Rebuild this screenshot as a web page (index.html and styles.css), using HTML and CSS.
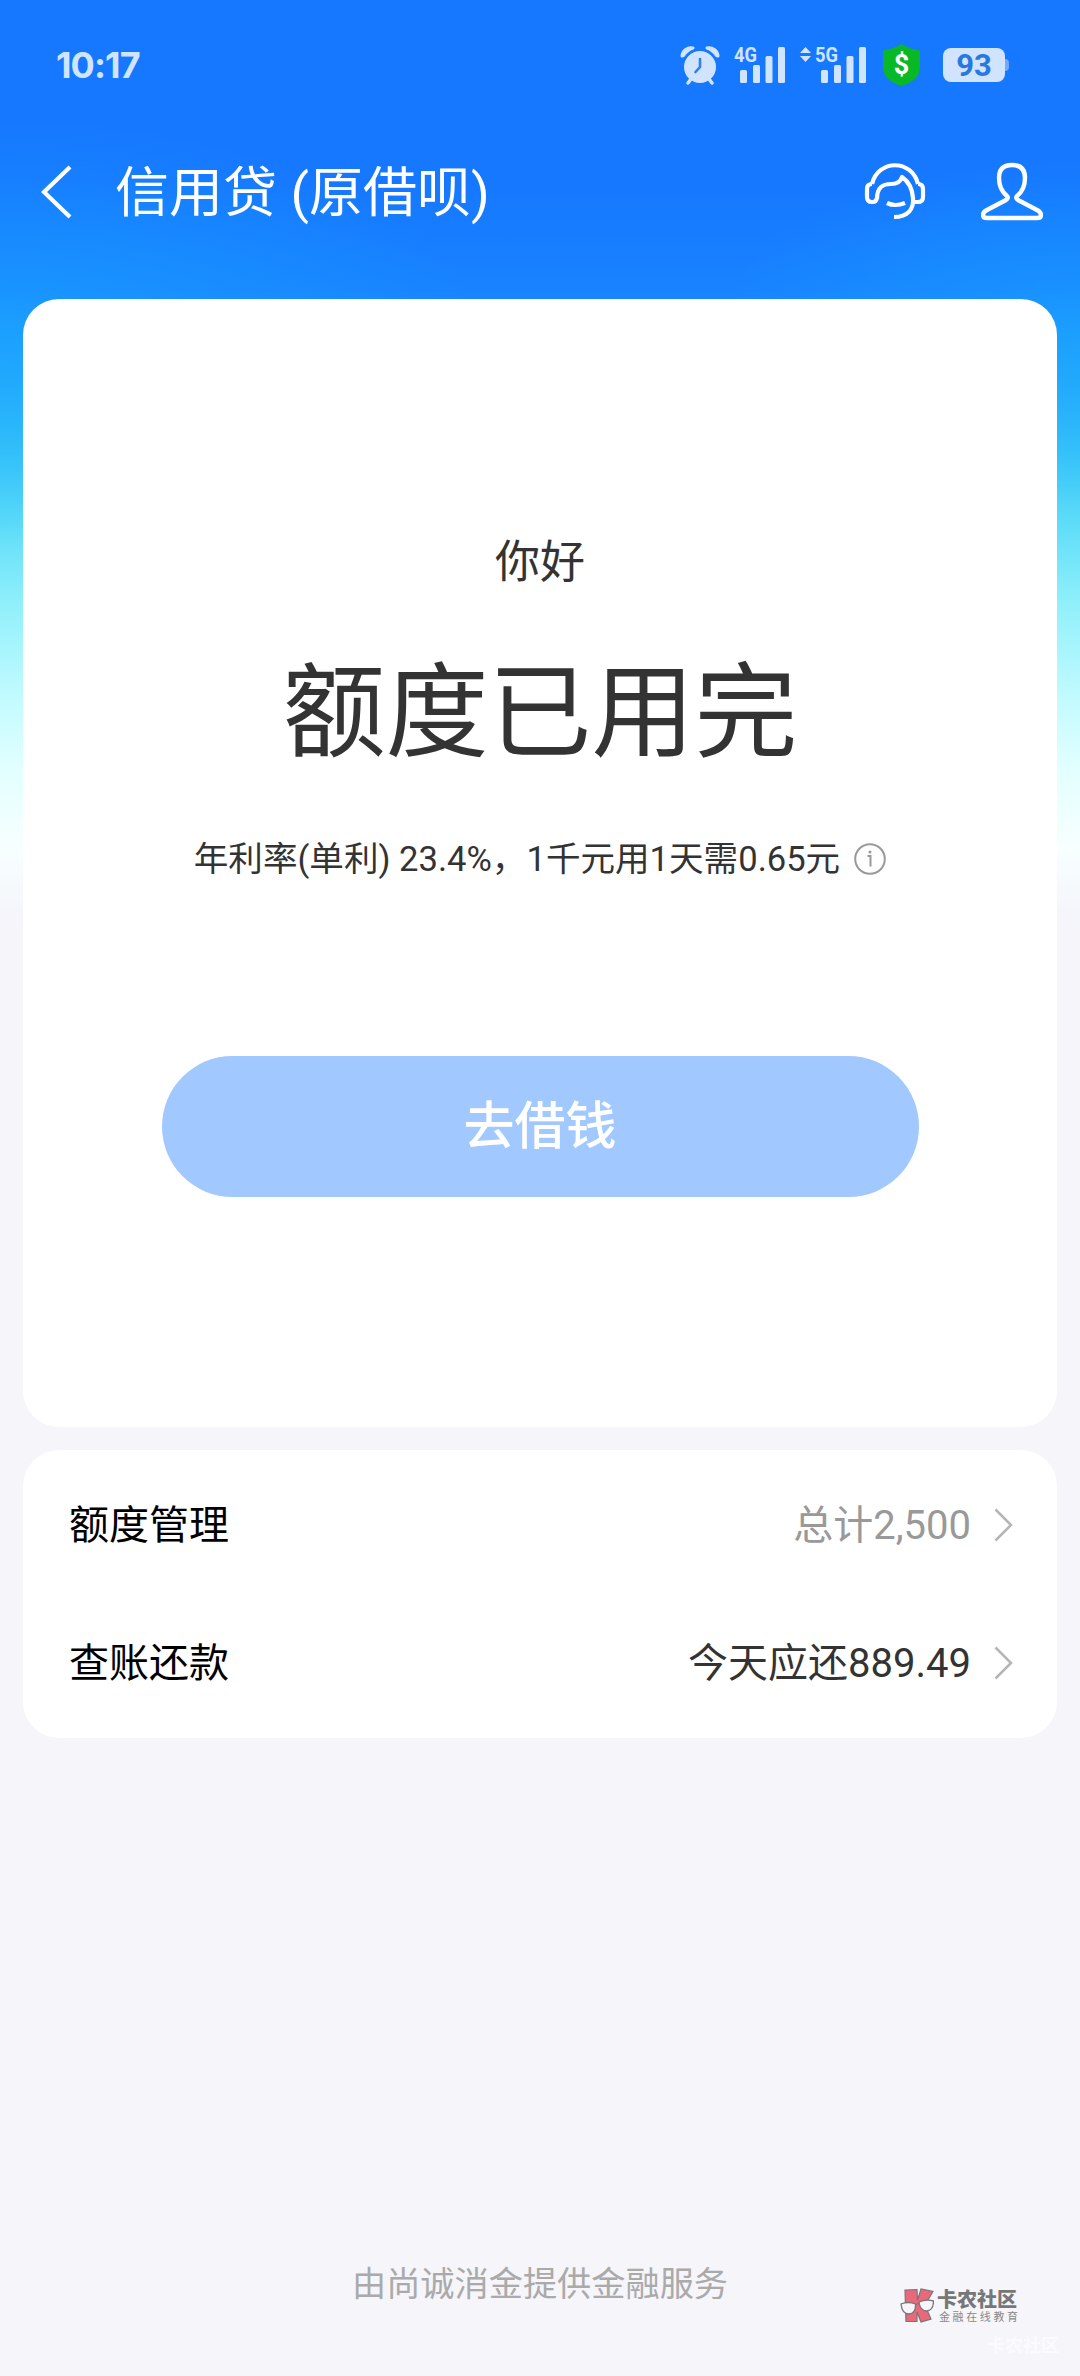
FILE: index.html
```html
<!DOCTYPE html>
<html lang="zh-CN">
<head>
<meta charset="utf-8">
<title>信用贷</title>
<link rel="stylesheet" href="styles.css">
</head>
<body>
<div class="page">
  <div class="status">
    <span class="time">10:17</span>
    <div class="status-icons">
      <svg class="alarm" width="38" height="40" viewBox="0 0 38 40"><g fill="#d0e4ff"><circle cx="19" cy="22" r="16"/><path d="M1 11A9 9 0 0 1 12 3Q6 5 2.500 10.500ZM37 11A9 9 0 0 0 26 3Q32 5 35.500 10.500Z" stroke="#d0e4ff" stroke-width="3" stroke-linejoin="round"/><path d="M10 34l-3 4M28 34l3 4" stroke="#d0e4ff" stroke-width="3.500" stroke-linecap="round"/></g><path d="M19 14v8l-4.500 5" fill="none" stroke="#2f80e8" stroke-width="2.600" stroke-linecap="round"/></svg>
      <svg class="signal" width="52" height="40" viewBox="0 0 52 40" fill="#d0e4ff"><text class="net" x="0" y="17" textLength="23" lengthAdjust="spacingAndGlyphs">4G</text><rect x="6" y="25" width="7" height="13" rx="1.500"/><rect x="19" y="20" width="7" height="18" rx="1.500"/><rect x="31.500" y="11" width="7" height="27" rx="1.500"/><rect x="44" y="2" width="7" height="36" rx="1.500"/></svg>
      <svg class="signal-data" width="67" height="40" viewBox="0 0 67 40" fill="#d0e4ff"><path d="M0 8l5.500-6L11 8zM0 11h11l-5.500 6z"/><text class="net" x="15" y="17" textLength="23" lengthAdjust="spacingAndGlyphs">5G</text><rect x="21" y="25" width="7" height="13" rx="1.500"/><rect x="34" y="20" width="7" height="18" rx="1.500"/><rect x="46.500" y="11" width="7" height="27" rx="1.500"/><rect x="59" y="2" width="7" height="36" rx="1.500"/></svg>
      <svg class="shield" width="39" height="44" viewBox="0 0 39 44"><path d="M19.500 1Q27 6 37 7Q38 7 38 9V24Q38 37 19.500 43Q1 37 1 24V9Q1 7 2 7Q12 6 19.500 1Z" fill="#09b826"/><text class="dollar" x="19.500" y="31" text-anchor="middle">$</text></svg>
      <div class="battery"><span>93</span></div>
    </div>
  </div>

  <div class="navbar">
    <svg class="back" width="34" height="56" viewBox="0 0 34 56"><path d="M32 3L6 28L32 53" fill="none" stroke="#fff" stroke-width="4.200"/></svg>
    <h1 class="title">信用贷 (原借呗)</h1>
    <svg class="service" width="62" height="60" viewBox="0 0 62 60" fill="none" stroke="#fff" stroke-width="4.200" stroke-linejoin="round"><path d="M8 22C14 -3 48 -3 54 22"/><path d="M8 22Q3 22 3 27V35Q3 40 8 40H9Q12 40 13 36M54 22Q59 22 59 27V35Q59 40 54 40H49"/><path d="M13 37C13 25 19 22 27 22Q36 22 38 15Q48 22 49 36C50 47 44 55 30 55"/><path d="M23 41q8 4 18 0"/></svg>
    <svg class="profile" width="62" height="60" viewBox="0 0 62 60" fill="none" stroke="#fff" stroke-width="4.400" stroke-linejoin="round"><path d="M31 3C22 3 18 8 18 16C18 24 21 30 26 34Q28 36 25 38L6 48Q2 50 2 53Q2 56 6 56H56Q60 56 60 53Q60 50 56 48L37 38Q34 36 36 34C41 30 44 24 44 16C44 8 40 3 31 3Z"/></svg>
  </div>

  <main class="content">
    <section class="card quota">
      <p class="greeting">你好</p>
      <h2 class="headline">额度已用完</h2>
      <div class="rate"><span>年利率(单利) 23.4%，1千元用1天需0.65元</span>
        <svg width="32" height="32" viewBox="0 0 32 32" fill="none" stroke="#999" stroke-width="2"><circle cx="16" cy="16" r="14.800"/><path d="M13.500 13h3v10.500"/><circle cx="16" cy="9" r="1.500" fill="#999" stroke="none"/></svg>
      </div>
      <button class="borrow">去借钱</button>
    </section>
    <section class="card list">
      <div class="row"><span class="label">额度管理</span><span class="value muted">总计2,500</span><svg width="20" height="34" viewBox="0 0 20 34"><path d="M2.500 1.500L18 17L2.500 32.500" fill="none" stroke="#b5b5b5" stroke-width="2.500"/></svg></div>
      <div class="row"><span class="label">查账还款</span><span class="value">今天应还889.49</span><svg width="20" height="34" viewBox="0 0 20 34"><path d="M2.500 1.500L18 17L2.500 32.500" fill="none" stroke="#b5b5b5" stroke-width="2.500"/></svg></div>
    </section>
  </main>

  <footer class="footer">由尚诚消金提供金融服务</footer>
  <div class="watermark">
    <svg width="34" height="36" viewBox="0 0 34 36"><path d="M5 2L17 1.500L17.500 12L21 1L33 3.500L25 17L31 31L21 34L17 24V33.500H6Z" fill="#e9697a" stroke="#777" stroke-width="1.200"/><path d="M1 16Q8 13 15.500 16Q16 25 9 26Q2 26 1 16ZM19 14Q26 11 33.500 13Q33.500 22 27 23Q20 23 19 14Z" fill="#f5f5fa" stroke="#777" stroke-width="1.300"/><path d="M15.500 17q2-2 4-1" stroke="#777" fill="none"/></svg>
    <div class="brand"><b>卡农社区</b><small>金融在线教育</small></div>
  </div>
  <span class="ghost">卡农社区</span>
</div>
</body>
</html>
```
FILE: styles.css
```css
* { box-sizing: border-box; margin: 0; padding: 0; }
body { font-family: Roboto, "Noto Sans CJK SC", sans-serif; color: #333; background: #f5f5fa; }
.page {
  position: relative;
  display: flex;
  flex-direction: column;
  height: 2376px;
  overflow: hidden;
  background:
    radial-gradient(ellipse 480px 220px at 0 330px, rgba(26, 172, 255, .5), rgba(26, 172, 255, 0)),
    radial-gradient(ellipse 360px 180px at 1080px 330px, rgba(26, 172, 255, .45), rgba(26, 172, 255, 0)),
    linear-gradient(#1677ff 0, #1677ff 180px, #1883ff 290px, #24a8fc 380px, #38c4f8 450px, #5cdcf8 520px, #8eeffb 600px, #c3fbff 700px, #e3ffff 770px, #f8ffff 850px, #f5f6fb 910px, #f5f5fa 1000px);
}
.status { display: flex; justify-content: space-between; align-items: center; height: 130px; padding: 0 71px 0 56px; }
.time { font: 700 36px/40px Inter, sans-serif; letter-spacing: -.9px; color: #d0e4ff; }
.status-icons { display: flex; align-items: center; }
.status-icons svg { overflow: visible; }
.alarm { margin-right: 15px; }
.signal { margin-right: 14px; }
.signal-data { margin-right: 15px; }
.shield { margin-right: 22px; }
.net { font: 700 21px Roboto, sans-serif; }
.dollar { font: 700 27px Roboto, sans-serif; fill: #fff; }
.battery {
  position: relative;
  width: 62px;
  height: 34px;
  margin-right: 4px;
  border-radius: 8px;
  background: #d0e4ff;
  color: #2878df;
  font: 700 31px/36px Roboto, sans-serif;
  text-align: center;
}
.battery::after { content: ""; position: absolute; right: -4px; top: 11px; width: 4px; height: 12px; border-radius: 0 4px 4px 0; background: #6fabff; }
.navbar { display: flex; align-items: center; height: 124px; padding: 0 37px 0 38px; }
.back { margin-right: 43px; }
.title { flex: 1; padding-top: 3px; font-size: 54px; line-height: 70px; font-weight: 400; color: #fff; white-space: pre; }
.service { margin-right: 55px; }
.content { display: flex; flex-direction: column; gap: 23px; padding: 45px 23px 0; }
.card { border-radius: 36px; background: #fff; }
.quota { display: flex; flex-direction: column; align-items: center; height: 1128px; padding-top: 231px; }
.greeting { font-size: 45px; line-height: 66px; }
.headline { margin-top: 43px; font-size: 103px; line-height: 150px; font-weight: 400; }
.rate { display: flex; align-items: center; gap: 14px; margin-top: 44px; font-size: 34.6px; line-height: 52px; white-space: nowrap; }
.borrow { width: 757px; height: 141px; margin-top: 171px; border: 0; border-radius: 71px; background: #a1c8ff; color: #fff; font: 500 51px/70px Roboto, "Noto Sans CJK SC", sans-serif; }
.list { height: 288px; padding: 6px 44px 0 46px; }
.row { display: flex; align-items: center; height: 138px; font-size: 40px; line-height: 60px; }
.label, .value { padding-top: 2px; }
.label { flex: 1; color: #000; }
.value { margin-right: 22px; }
.muted { color: #999; }
.footer { margin-top: 521px; font-size: 34.2px; line-height: 50px; text-align: center; color: #aaa; }
.watermark { position: absolute; left: 900px; top: 2288px; display: flex; gap: 3px; }
.brand { display: flex; flex-direction: column; color: #777; }
.brand b { font-size: 20px; line-height: 24px; font-weight: 900; }
.brand small { margin-left: 2px; font-size: 11px; line-height: 12px; letter-spacing: 2.600px; color: #888; }
.ghost { position: absolute; left: 987px; top: 2333px; font-size: 18px; line-height: 26px; font-weight: 700; color: rgba(255, 255, 255, .7); }
```
